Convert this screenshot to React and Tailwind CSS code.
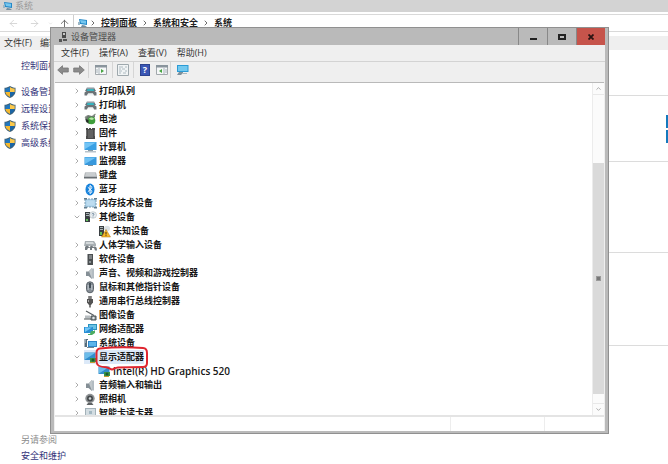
// DeviceManager.jsx
import React, { useState } from "react";
import {
  ArrowLeft,
  ArrowRight,
  ArrowUp,
  ChevronDown,
  ChevronRight,
  ChevronUp,
} from "lucide-react";

const sidebarLinks = ["设备管理器", "远程设置", "系统保护", "高级系统设置"];

const dialogMenu = ["文件(F)", "操作(A)", "查看(V)", "帮助(H)"];

const devices = [
  { name: "打印队列", icon: "printer" },
  { name: "打印机", icon: "printer" },
  { name: "电池", icon: "battery" },
  { name: "固件", icon: "firmware" },
  { name: "计算机", icon: "computer" },
  { name: "监视器", icon: "monitor" },
  { name: "键盘", icon: "keyboard" },
  { name: "蓝牙", icon: "bluetooth" },
  { name: "内存技术设备", icon: "memory" },
  {
    name: "其他设备",
    icon: "other",
    children: [{ name: "未知设备", icon: "unknown" }],
  },
  { name: "人体学输入设备", icon: "hid" },
  { name: "软件设备", icon: "software" },
  { name: "声音、视频和游戏控制器", icon: "speaker" },
  { name: "鼠标和其他指针设备", icon: "mouse" },
  { name: "通用串行总线控制器", icon: "usb" },
  { name: "图像设备", icon: "imaging" },
  { name: "网络适配器", icon: "network" },
  { name: "系统设备", icon: "system" },
  {
    name: "显示适配器",
    icon: "display",
    selected: true,
    children: [{ name: "Intel(R) HD Graphics 520", icon: "display", latin: true }],
  },
  { name: "音频输入和输出", icon: "speaker" },
  { name: "照相机", icon: "camera" },
  { name: "智能卡读卡器", icon: "card" },
];

const drawings = {
  printer: (
    <>
      <path d="M3 2h7l1 2H2z" fill="#c3cbd0" />
      <path d="M2.500 3.500h8L12 6H1z" fill="#66757d" />
      <path d="M3.500 4h6l.8 2.500H2.700z" fill="#35b3bf" />
      <path d="M.5 10.500V7.500l2-1.500h8l2 1.500v3H10L9 8.500H4l-1 2z" fill="#6c7377" />
      <path d="M4.200 8.500h4.600l.8 2H3.400z" fill="#f0f3f4" />
    </>
  ),
  battery: (
    <>
      <path d="M1 4l3-2 4 1 3-2v3l-1 1 1 4-3 2H5L2 9z" fill="#6d776f" />
      <path d="M1 5l2-2M9 3l2.500-2" stroke="#8a938c" strokeWidth="1.200" />
      <circle cx="7.500" cy="7.500" r="3.800" fill="#3f9e3c" />
      <path d="M5 6c1-2 4-2 5 0l-2 1z" fill="#b9e3a8" />
      <path d="M1.500 6l3 1v3l-2-1z" fill="#222b25" />
    </>
  ),
  firmware: (
    <>
      <path d="M2 1h2v1h1V1h2v1h1V1h3v11H2z" fill="#4a4a4a" />
      <path d="M4 3h5v8H4z" fill="#626262" />
      <path d="M2 4h1M2 6h1M2 8h1M10 4h1M10 6h1M10 8h1" stroke="#999" />
    </>
  ),
  computer: (
    <>
      <rect x=".5" y="1" width="12" height="8" fill="#3aa0e4" />
      <path d="M1 1.500h11L1 8z" fill="#72c4f5" />
      <path d="M4 9h5v1H4z" fill="#889aa5" />
      <path d="M1 10h11v1.500H1z" fill="#b8c3ca" />
    </>
  ),
  monitor: (
    <>
      <rect x=".5" y="2" width="12" height="8" rx=".5" fill="#3898dc" />
      <path d="M1 2.500h11L1 9z" fill="#6dc1f4" />
      <path d="M4 10h5v1H4z" fill="#77909f" />
    </>
  ),
  keyboard: (
    <>
      <path d="M1 3.500h11l1 5H0z" fill="#9a9fa3" />
      <path d="M1.500 4h10l.5 3.500H1z" fill="#c9cdcf" />
      <path d="M0 8h13v1.500H0z" fill="#696f73" />
    </>
  ),
  bluetooth: (
    <>
      <ellipse cx="6" cy="6.500" rx="4.500" ry="6" fill="#1682dc" />
      <path d="M3.800 4.200l4.400 4.300L6 10.600V2.400l2.200 2.100-4.400 4.300" fill="none" stroke="#fff" />
    </>
  ),
  memory: (
    <>
      <rect x="1" y="2" width="11" height="8" fill="#a9cfe8" stroke="#7f9fb3" strokeDasharray="2 1" />
      <path d="M2.500 3.500h8v5h-8z" fill="#bddcf0" />
      <path d="M0 1h3v1.500H0zM10 1h3v1.500h-3zM0 10h3v1.500H0zM10 10h3v1.500h-3z" fill="#627d8e" />
    </>
  ),
  other: (
    <>
      <path d="M1 1h5v10H1z" fill="#3a3f42" />
      <path d="M2 2.500h3M2 4.500h3" stroke="#a9b2b5" />
      <path d="M2 8h2v2H2z" fill="#61c058" />
      <ellipse cx="9" cy="4" rx="3.500" ry="3.300" fill="#e9edf0" stroke="#a5aeb4" strokeWidth=".5" />
      <path d="M8 3.200c.3-1.200 2-.9 1.900.1 0 .7-.9.700-.9 1.500M9 5.600v.8" fill="none" stroke="#4e6c87" strokeWidth=".8" />
    </>
  ),
  unknown: (
    <>
      <path d="M1 1h5v10H1z" fill="#3a3f42" />
      <path d="M2 2.500h3M2 4.500h3" stroke="#a9b2b5" />
      <path d="M2 7h2v3H2z" fill="#61c058" />
      <ellipse cx="9" cy="3.500" rx="3" ry="2.800" fill="#dce2e6" />
      <path d="M8 4.500l4.500 7.500h-9z" fill="#f6b829" stroke="#aa7414" strokeWidth=".5" />
      <path d="M8 7v2.500M8 10.200v.9" stroke="#42310c" />
    </>
  ),
  hid: (
    <>
      <path d="M1 2h9l2 3v2H0z" fill="#a8afb3" />
      <path d="M2 3h7l1 2H2z" fill="#d3d8da" />
      <path d="M1 11V8.500C1 6 5 6 5 8.500L6 8c1-2 3-1 3 0l1-.5c2-.5 3 1 3 4h-2L10 9H8v2H6V9H4l-1 2z" fill="#747b80" />
    </>
  ),
  software: (
    <>
      <rect x="3.500" y="1" width="5.500" height="11" fill="#4b4f51" />
      <path d="M5 3h3M5 5h3" stroke="#b5babd" />
      <path d="M5 8h2v2H5z" fill="#8a9194" />
    </>
  ),
  speaker: (
    <>
      <path d="M2 4.500h2.500L8 1v11L4.500 9H2z" fill="#858f96" />
      <path d="M5 4.500L8 1v11z" fill="#c0c7cb" />
      <path d="M9 1.500v10" stroke="#667884" strokeWidth="1" />
    </>
  ),
  mouse: (
    <>
      <rect x="2.500" y=".8" width="7" height="11" rx="3.500" fill="#868e96" stroke="#5c646b" />
      <path d="M4.200 4v5M7.800 4v5" stroke="#c1c9d0" />
      <path d="M6 2v5" stroke="#2d3942" strokeWidth="1.500" />
    </>
  ),
  usb: (
    <>
      <path d="M4.200 1h3.600v3H4.200z" fill="#7b7b7b" />
      <path d="M3 4h6v3.500L7 10H5L3 7.500z" fill="#545454" />
      <path d="M6 9v3.500" stroke="#555" strokeWidth="1.500" />
      <path d="M4.500 5v2" stroke="#aaa" />
    </>
  ),
  imaging: (
    <>
      <path d="M2 2l8 4.500" stroke="#575d60" strokeWidth="1.200" />
      <path d="M1 6.500h5v3H1z" fill="#b7bdc0" />
      <path d="M0 10h7M7 7h5v4H7z" stroke="#4d5457" fill="#80888c" />
      <circle cx="9.500" cy="9" r="1.200" fill="#e2e7e9" />
    </>
  ),
  network: (
    <>
      <path d="M4 1h9v6H4z" fill="#2b91bd" />
      <path d="M5 2h7v4H5z" fill="#69c2e4" />
      <path d="M0 4h9v6H0z" fill="#2a8fd4" />
      <path d="M1 4.500h7L1 9z" fill="#72c7f7" />
      <path d="M7 8h3l1-1v3l-3 2H4v-1h2z" fill="#4bab61" />
    </>
  ),
  system: (
    <>
      <path d="M.5 2H4v1H3v7H.5z" fill="#566d7c" />
      <path d="M1 3h1M1 5h1" stroke="#cbd6dd" />
      <path d="M4 4h9v6H4z" fill="#2f86c8" />
      <path d="M5 5h7v4H5z" fill="#5db4ea" />
      <path d="M3 10h7v1H3z" fill="#738590" />
    </>
  ),
  display: (
    <>
      <rect x=".5" y="1.500" width="11" height="7.500" fill="#318dcc" />
      <path d="M1 2h10L1 8.500z" fill="#6bbcea" />
      <path d="M6 7h6v4H6z" fill="#389345" />
      <circle cx="9" cy="9" r="1.500" fill="#1e5a31" />
      <path d="M6 11h5v1H6z" fill="#c69a33" />
    </>
  ),
  camera: (
    <>
      <circle cx="6" cy="5.500" r="4.700" fill="#8e9294" />
      <circle cx="6" cy="5.500" r="3" fill="#45494c" />
      <circle cx="6" cy="5.500" r="1.300" fill="#d2d7d9" />
      <path d="M4 10h4l1.500 2h-7z" fill="#5e6264" />
    </>
  ),
  card: (
    <>
      <rect x="1.500" y="1.500" width="10" height="10" fill="#d3dde2" stroke="#a3b1b8" />
      <path d="M5 4h3v3H5z" fill="#a4b8c2" />
    </>
  ),
};

const DeviceIcon = ({ name }) => (
  <svg viewBox="0 0 13 13" className="w-[13px] h-[13px] shrink-0" aria-hidden="true">
    {drawings[name]}
  </svg>
);

const Shield = () => (
  <svg viewBox="0 0 12 12" className="w-3 h-3 shrink-0" aria-hidden="true">
    <path d="M6 0C4 1.300 2.500 1.700.5 1.800V5c0 3.500 2.500 5.800 5.500 7 3-1.200 5.500-3.500 5.500-7V1.800C9.500 1.700 8 1.300 6 0z" fill="#3f6076" />
    <path d="M6 1C4.500 2 3 2.500 1.300 2.600V6H6z" fill="#2277bd" />
    <path d="M6 1c1.500 1 3 1.500 4.700 1.600V6H6z" fill="#fbc84a" />
    <path d="M1.300 6H6v5C3.500 9.900 1.600 8.300 1.300 6z" fill="#f4b82f" />
    <path d="M10.700 6H6v5c2.500-1.100 4.400-2.700 4.700-5z" fill="#1b65a5" />
  </svg>
);

const SystemIcon = () => (
  <svg viewBox="0 0 10 10" className="w-[10px] h-[10px] shrink-0" aria-hidden="true">
    <path d="M1 1l8 1v5L2 6z" fill="#2388c7" />
    <path d="M2 2l6 .8v3L3 5z" fill="#74c6ef" />
    <path d="M4 7l3 .5L9 9H3z" fill="#708d9f" />
    <path d="M0 4h2v3H0z" fill="#9bb6c5" />
  </svg>
);

const Arrow = ({ flip }) => (
  <svg viewBox="0 0 12 10" className={`w-3 h-[10px] ${flip ? "rotate-180" : ""}`} aria-hidden="true">
    <path d="M.7 5L5.500.7V3h5.800v4H5.500v2.300z" fill="#8b8b8b" stroke="#777" strokeWidth=".8" />
  </svg>
);

const PaneIcon = ({ left }) => (
  <svg viewBox="0 0 12 10" className="w-3 h-[10px]" aria-hidden="true">
    <path d="M.5.5h11v9H.5z" fill="#f5f7f8" stroke="#a2a8ac" />
    <path d="M0 0h12v2.500H0z" fill="#8a959d" />
    <path d={left ? "M4 3v6M1 5h2M1 7h2" : "M8 3v6M9 5h2M9 7h2"} stroke="#a9b4bb" />
    <path d={left ? "M6 4l3 2-3 2z" : "M6 4L3 6l3 2z"} fill="#46a441" />
  </svg>
);

const Separator = () => <span className="w-px h-4 bg-[#d5d5d5]" />;

const TreeRow = ({ item, level, open, onToggle }) => (
  <div className={`flex items-center h-[14px] ${level ? "pl-[43px]" : "pl-[18px]"}`}>
    {level === 0 && (
      <button
        type="button"
        aria-label={item.name}
        aria-expanded={open}
        onClick={onToggle}
        className="w-[11px] shrink-0 text-[#808080]"
      >
        {open ? <ChevronDown size={8} /> : <ChevronRight size={8} />}
      </button>
    )}
    <span
      className={`relative flex items-center h-[14px] gap-[2px] ${
        item.selected ? "bg-[#dce9f8]" : ""
      }`}
    >
      <DeviceIcon name={item.icon} />
      <span className={`whitespace-nowrap ${item.latin ? "text-[10px] font-semibold" : ""}`}>
        {item.name}
      </span>
      {item.selected && (
        <svg
          viewBox="0 0 54 26"
          className="absolute left-[11px] -top-1 z-10 w-[54px] h-[26px]"
          aria-hidden="true"
        >
          <path
            d="M5 2.500C18 1 36 1 48 2c3 .2 4 2 4 5v10c0 3-1 4-4 4l-25 .5c-3 .2-4 1.800-6 2-2-.5-3-2-6-2.300C5 21 2 20 1.500 16V7C1.500 4.500 2.500 2.800 5 2.500z"
            fill="none"
            stroke="#df2630"
            strokeWidth="2"
          />
        </svg>
      )}
    </span>
  </div>
);

const DeviceTree = () => {
  const [opened, setOpened] = useState(["其他设备", "显示适配器"]);

  const toggle = (name) =>
    setOpened((prev) =>
      prev.includes(name) ? prev.filter((n) => n !== name) : [...prev, name]
    );

  return (
    <ul className="flex-1 min-w-0 pt-px overflow-hidden font-bold text-[#161616]">
      {devices.map((item) => {
        const open = opened.includes(item.name) && !!item.children;
        return (
          <li key={item.name}>
            <TreeRow item={item} level={0} open={open} onToggle={() => toggle(item.name)} />
            {open && (
              <ul>
                {item.children.map((child) => (
                  <li key={child.name}>
                    <TreeRow item={child} level={1} />
                  </li>
                ))}
              </ul>
            )}
          </li>
        );
      })}
    </ul>
  );
};

const Scrollbar = () => (
  <div className="flex flex-col w-3 shrink-0 border-l border-[#ececec] bg-[#fbfbfb] text-[#777]">
    <button type="button" aria-label="向上滚动" className="flex items-center justify-center h-3 border-b border-[#e8e8e8]">
      <ChevronUp size={7} />
    </button>
    <div className="grow-[69]" />
    <div className="grow-[229] flex items-center justify-center bg-[#dadada]">
      <span className="w-[5px] h-[5px] border border-[#9a9a9a] bg-[#777]" />
    </div>
    <div className="grow-[9]" />
    <button type="button" aria-label="向下滚动" className="flex items-center justify-center h-3 border-t border-[#e8e8e8]">
      <ChevronDown size={7} />
    </button>
  </div>
);

const DeviceManager = () => (
  <section className="absolute top-[27px] left-[50px] right-[59px] bottom-[30px] flex flex-col bg-[#bababa] border border-[#909090] px-[3px] pb-[2px]">
    {/* Title bar */}
    <header className="flex items-center h-[17px] shrink-0 pl-[5px]">
      <svg viewBox="0 0 8 10" className="w-2 h-[10px] mr-1" aria-hidden="true">
        <path d="M3 0h4v6H3z" fill="#4b4b4b" />
        <path d="M4 1h2v2H4z" fill="#c8c8c8" />
        <path d="M0 7h3v3H0zM4 7h4v2H4z" fill="#555" />
      </svg>
      <h1 className="flex-1 text-[#4d4d4d]">设备管理器</h1>
      <div className="flex self-stretch">
        <button type="button" aria-label="最小化" className="flex items-center justify-center w-[29px] border-l border-[#888]">
          <span className="w-[7px] h-[2px] mt-[5px] bg-[#222]" />
        </button>
        <button type="button" aria-label="最大化" className="flex items-center justify-center w-[29px] border-l border-[#888]">
          <span className="w-2 h-[6px] border-2 border-[#222]" />
        </button>
        <button type="button" aria-label="关闭" className="flex items-center justify-center w-[29px] border-l border-[#888] bg-[#c6544b]">
          <svg viewBox="0 0 6 6" className="w-[6px] h-[6px]" aria-hidden="true">
            <path d="M.5.5l5 5M5.500.5l-5 5" stroke="#2a1413" strokeWidth="1.800" />
          </svg>
        </button>
      </div>
    </header>

    <div className="flex flex-col flex-1 min-h-0 bg-[#efefef]">
      <nav className="flex items-center h-[17px] shrink-0 gap-[10px] pl-[7px] border-b border-[#d3d3d3] text-[#333]">
        {dialogMenu.map((label) => (
          <button type="button" key={label} className="whitespace-nowrap">
            {label}
          </button>
        ))}
      </nav>

      {/* Toolbar */}
      <div className="flex items-center h-5 shrink-0 pl-[3px] pb-1">
        <button type="button" aria-label="后退"><Arrow /></button>
        <button type="button" aria-label="前进" className="ml-1 mr-[3px]"><Arrow flip /></button>
        <Separator />
        <button type="button" aria-label="显示控制台树" className="ml-[6px] mr-[5px]"><PaneIcon left /></button>
        <Separator />
        <button type="button" aria-label="属性" className="mx-1">
          <svg viewBox="0 0 12 12" className="w-3 h-3" aria-hidden="true">
            <path d="M.5.5h11v11H.5z" fill="#f1f4f5" stroke="#9ea8ad" />
            <path d="M2 3h4M2 5h2M5 5h3M2 7h3M6 9h3M8 3h2M8 7h2M2 9h2" stroke="#aebac1" />
          </svg>
        </button>
        <Separator />
        <button
          type="button"
          aria-label="帮助"
          className="w-[10px] h-3 mx-[6px] bg-[#3a56b4] border border-[#2c438f] text-white font-bold leading-[10px]"
        >
          ?
        </button>
        <button type="button" aria-label="操作窗格" className="mr-[2px]"><PaneIcon /></button>
        <Separator />
        <button type="button" aria-label="扫描检测硬件改动" className="ml-[5px]">
          <svg viewBox="0 0 13 12" className="w-[13px] h-3" aria-hidden="true">
            <path d="M1 1h11.500v7H1z" fill="#2b9bd5" />
            <path d="M2 2h9.500v5H2z" fill="#73c9ef" />
            <path d="M3 8h4v1l-2 2H1z" fill="#7e919c" />
            <path d="M7 9h4v1H7z" fill="#adb8be" />
          </svg>
        </button>
      </div>

      <div className="flex flex-1 min-h-0 border-t border-[#b9b9b9] bg-white ml-px mr-px">
        <DeviceTree />
        <Scrollbar />
      </div>

      {/* Status bar */}
      <footer className="flex h-4 shrink-0 ml-px mr-px border-t-2 border-[#e4e4e4] bg-white">
        <span className="flex-1" />
        <span className="w-[94px] border-l border-[#ededed]" />
        <span className="w-[60px] border-l border-[#ededed]" />
      </footer>
    </div>
  </section>
);

export default function App() {
  return (
    <div className="relative flex flex-col h-screen overflow-hidden bg-white font-['Open_Sans','Noto_Sans_CJK_SC',sans-serif] text-[9px] leading-[14px]">
      <header className="flex items-center h-3 shrink-0 gap-[2px] pl-[3px] bg-[#d3d3d3] text-[#9a9a9a]">
        <SystemIcon />
        <span>系统</span>
      </header>

      {/* Address bar */}
      <div className="flex h-[18px] shrink-0 mt-[2px] border-y border-[#d9d9d9]">
        <div className="flex items-center w-[73px] pl-2 text-[#c6c6c6]">
          <button type="button" aria-label="后退"><ArrowLeft size={11} strokeWidth={1.5} /></button>
          <button type="button" aria-label="前进" className="ml-[10px]"><ArrowRight size={11} strokeWidth={1.5} /></button>
          <ChevronDown size={5} className="ml-2" />
          <button type="button" aria-label="向上" className="ml-[6px] text-[#666]"><ArrowUp size={11} strokeWidth={2} /></button>
        </div>
        <div className="flex flex-1 items-center gap-1 pl-1 border-l border-[#cfcfcf] font-bold text-[#222]">
          <span className="flex items-center gap-px">
            <SystemIcon />
            <ChevronRight size={8} />
          </span>
          <a href="#panel">控制面板</a>
          <ChevronRight size={8} />
          <a href="#security">系统和安全</a>
          <ChevronRight size={8} />
          <a href="#system">系统</a>
        </div>
      </div>

      <nav className="flex items-center h-[14px] shrink-0 gap-2 mt-1 pl-1 bg-[#efefef] text-[#333]">
        <button type="button">文件(F)</button>
        <button type="button">编辑(E)</button>
      </nav>

      <div className="flex flex-1 min-h-0">
        <aside className="flex flex-col w-[120px] shrink-0 pt-[9px] pb-px text-[#34347a]">
          <a href="#home" className="pl-[21px]">控制面板主页</a>
          <ul className="flex flex-col gap-[3px] mt-3">
            {sidebarLinks.map((label) => (
              <li key={label}>
                <a href={`#${label}`} className="flex items-center gap-[5px] pl-1">
                  <Shield />
                  {label}
                </a>
              </li>
            ))}
          </ul>
          <div className="mt-auto pl-[21px]">
            <p className="mb-[2px] text-[#8c8c8c]">另请参阅</p>
            <a href="#maintenance">安全和维护</a>
          </div>
        </aside>

        <main className="flex-1 min-w-0 overflow-hidden">
          <div className="h-[46px] border-b border-[#dcdcdc]" />
          <div className="flex items-center justify-end h-[66px] border-b border-[#dcdcdc]">
            <svg viewBox="0 0 30 30" className="w-[30px] h-[30px] -mr-7 shrink-0" aria-hidden="true">
              <path d="M0 1h14v13H0zM15 1h15v13H15zM0 16h14v13H0zM15 16h15v13H15z" fill="#1479bd" />
            </svg>
          </div>
          <div className="h-[91px] border-b border-[#dcdcdc]" />
          <div className="h-[93px] border-b border-[#dcdcdc]" />
        </main>
      </div>

      <DeviceManager />
    </div>
  );
}
